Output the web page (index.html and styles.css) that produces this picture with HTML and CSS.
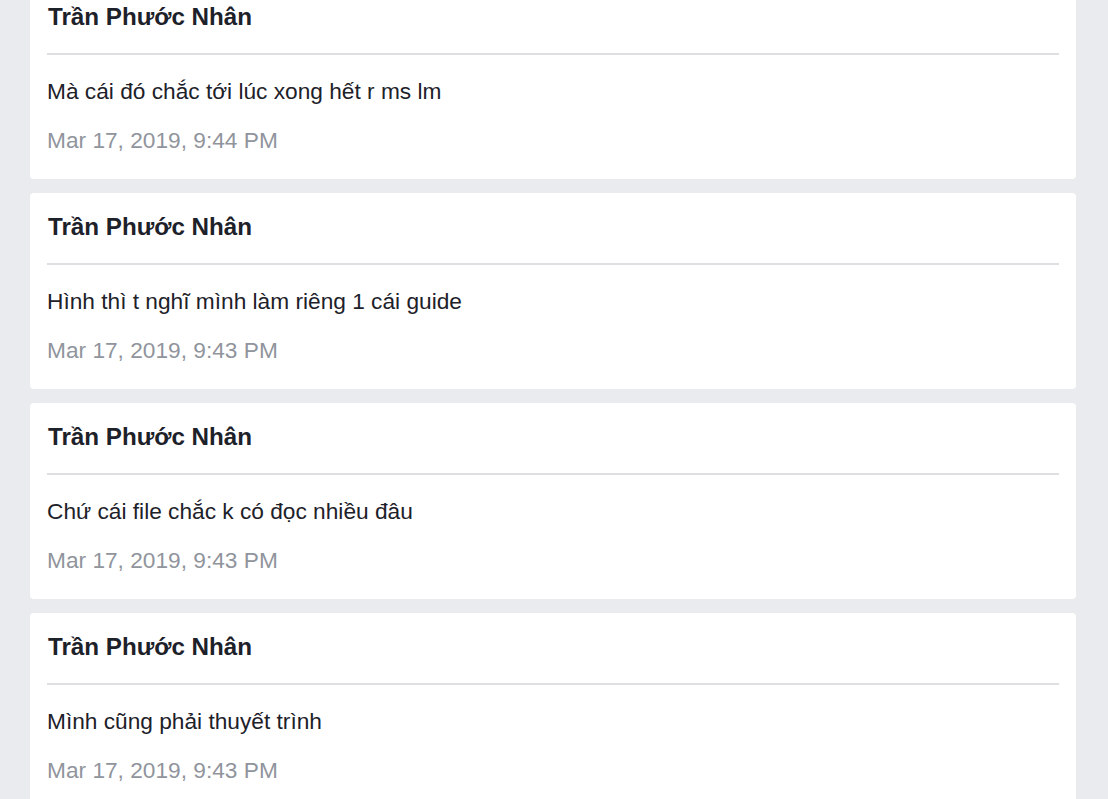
FILE: index.html
```html
<!DOCTYPE html>
<html lang="vi">
<head>
<meta charset="utf-8">
<title>Messages</title>
<link rel="stylesheet" href="styles.css">
</head>
<body>
<main class="feed">
  <article class="card">
    <header class="card-head"><h2 class="author">Trần Phước Nhân</h2></header>
    <div class="card-body">
      <p class="message">Mà cái đó chắc tới lúc xong hết r ms lm</p>
      <p class="time">Mar 17, 2019, 9:44 PM</p>
    </div>
  </article>
  <article class="card">
    <header class="card-head"><h2 class="author">Trần Phước Nhân</h2></header>
    <div class="card-body">
      <p class="message">Hình thì t nghĩ mình làm riêng 1 cái guide</p>
      <p class="time">Mar 17, 2019, 9:43 PM</p>
    </div>
  </article>
  <article class="card">
    <header class="card-head"><h2 class="author">Trần Phước Nhân</h2></header>
    <div class="card-body">
      <p class="message">Chứ cái file chắc k có đọc nhiều đâu</p>
      <p class="time">Mar 17, 2019, 9:43 PM</p>
    </div>
  </article>
  <article class="card">
    <header class="card-head"><h2 class="author">Trần Phước Nhân</h2></header>
    <div class="card-body">
      <p class="message">Mình cũng phải thuyết trình</p>
      <p class="time">Mar 17, 2019, 9:43 PM</p>
    </div>
  </article>
</main>
</body>
</html>
```

FILE: styles.css
```css
html, body {
  margin: 0;
  padding: 0;
  background: #e9ebee;
  font-family: "Liberation Sans", Arial, Helvetica, sans-serif;
  color: #1d2129;
  overflow: hidden;
}

.feed {
  display: flex;
  flex-direction: column;
  gap: 14px;
  margin-top: -17px;
  padding: 0 32px 0 30px;
}

.card {
  background: #ffffff;
  border-radius: 4px;
  padding: 0 17px 26px;
}

.card-head {
  padding: 19px 0 21px;
  border-bottom: 2px solid #dddfe2;
}

.author {
  margin: 0;
  font-size: 24.2px;
  line-height: 30px;
  font-weight: bold;
  padding-left: 1px;
}

.card-body {
  padding-top: 23px;
  display: flex;
  flex-direction: column;
  gap: 23px;
}

.message {
  margin: 0;
  font-size: 22.7px;
  line-height: 26px;
}

.time {
  margin: 0;
  font-size: 22.7px;
  line-height: 26px;
  color: #90949c;
}
```
